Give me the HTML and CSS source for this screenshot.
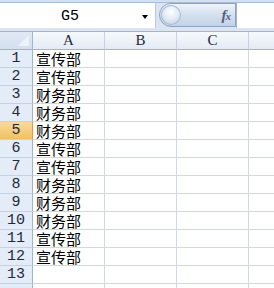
FILE: index.html
```html
<!DOCTYPE html>
<html>
<head>
<meta charset="utf-8">
<link rel="stylesheet" href="styles.css">
</head>
<body>
<div class="app">
  <div class="ribbon"></div>
  <div class="fbar">
    <div class="namebox"><span class="ref">G5</span><span class="caret"></span></div>
    <div class="pill"><span class="knob"></span><span class="fx">f<i>x</i></span></div>
    <div class="finput"></div>
  </div>
  <div class="sheet">
    <div class="corner"></div><div class="ch">A</div><div class="ch">B</div><div class="ch">C</div><div class="ch last"></div>
    <div class="rh">1</div><div class="c">宣传部</div><div class="c"></div><div class="c"></div><div class="c last"></div>
    <div class="rh">2</div><div class="c">宣传部</div><div class="c"></div><div class="c"></div><div class="c last"></div>
    <div class="rh">3</div><div class="c">财务部</div><div class="c"></div><div class="c"></div><div class="c last"></div>
    <div class="rh">4</div><div class="c">财务部</div><div class="c"></div><div class="c"></div><div class="c last"></div>
    <div class="rh sel">5</div><div class="c">财务部</div><div class="c"></div><div class="c"></div><div class="c last"></div>
    <div class="rh">6</div><div class="c">宣传部</div><div class="c"></div><div class="c"></div><div class="c last"></div>
    <div class="rh">7</div><div class="c">宣传部</div><div class="c"></div><div class="c"></div><div class="c last"></div>
    <div class="rh">8</div><div class="c">财务部</div><div class="c"></div><div class="c"></div><div class="c last"></div>
    <div class="rh">9</div><div class="c">财务部</div><div class="c"></div><div class="c"></div><div class="c last"></div>
    <div class="rh">10</div><div class="c">财务部</div><div class="c"></div><div class="c"></div><div class="c last"></div>
    <div class="rh">11</div><div class="c">宣传部</div><div class="c"></div><div class="c"></div><div class="c last"></div>
    <div class="rh">12</div><div class="c">宣传部</div><div class="c"></div><div class="c"></div><div class="c last"></div>
    <div class="rh">13</div><div class="c"></div><div class="c"></div><div class="c"></div><div class="c last"></div>
    <div class="rh"></div><div class="c"></div><div class="c"></div><div class="c"></div><div class="c last"></div>
  </div>
</div>
</body>
</html>
```

FILE: styles.css
```css
html, body {
  margin: 0;
  padding: 0;
  background: #ffffff;
}
.app {
  width: 274px;
  height: 288px;
  overflow: hidden;
  background: #dce6f2;
}
.ribbon {
  height: 2px;
  background: #d3e0f0;
  border-bottom: 1px solid #a7bcd6;
}
.fbar {
  display: flex;
  height: 25px;
  padding-bottom: 3px;
  background: #dbe5f1;
}
.namebox {
  width: 155px;
  background: #fff;
  border-right: 1px solid #b8c9de;
  display: flex;
  align-items: center;
}
.ref {
  font-family: "Liberation Mono", monospace;
  font-size: 15px;
  color: #000;
  margin-left: 61px;
  margin-top: 1px;
}
.caret {
  width: 0;
  height: 0;
  border-left: 3px solid transparent;
  border-right: 3px solid transparent;
  border-top: 4px solid #000;
  margin-left: 63px;
  margin-top: 2px;
}
.pill {
  margin-left: 3px;
  width: 77px;
  height: 24px;
  box-sizing: border-box;
  border: 1px solid #8aa3c2;
  border-radius: 12px 0 0 12px;
  background: linear-gradient(#eef3fa, #d4e0ef 50%, #c3d3e8);
  display: flex;
  align-items: center;
  justify-content: space-between;
}
.knob {
  width: 20px;
  height: 20px;
  margin-left: 1px;
  border-radius: 50%;
  background: radial-gradient(circle at 50% 35%, #ffffff 0, #e6edf6 40%, #c9d6e7 80%, #b4c4da 100%);
  box-shadow: inset 0 0 0 1px #a9bbd3;
}
.fx {
  font-family: "Liberation Serif", serif;
  font-style: italic;
  font-size: 15px;
  font-weight: bold;
  color: #56607a;
  margin-right: 5px;
  letter-spacing: -1px;
}
.fx i {
  font-size: 11px;
}
.finput {
  flex: 1;
  background: #fff;
  border-left: 1px solid #9fb3cd;
}
.sheet {
  display: grid;
  grid-template-columns: 33px 72px 72px 72px 1fr;
  grid-auto-rows: 18px;
  background: #fff;
  border-top: 1px solid #9eb6ce;
}
.sheet > div {
  box-sizing: border-box;
  border-right: 1px solid #d0d7e5;
  border-bottom: 1px solid #d0d7e5;
}
.corner {
  background: linear-gradient(#e0e9f4, #d4dfee);
  border-right: 1px solid #9eb6ce !important;
  border-bottom: 1px solid #9eb6ce !important;
  position: relative;
}
.corner::after {
  content: "";
  position: absolute;
  right: 3px;
  bottom: 3px;
  width: 0;
  height: 0;
  border-left: 11px solid transparent;
  border-bottom: 11px solid #eef3f9;
}
.ch {
  background: linear-gradient(#f6f9fc, #e4ebf5);
  border-right: 1px solid #c5d2e3 !important;
  border-bottom: 1px solid #9eb6ce !important;
  font-family: "Liberation Serif", serif;
  font-size: 15px;
  color: #1f2a3a;
  text-align: center;
  line-height: 17px;
}
.ch.last {
  border-right: none !important;
}
.rh {
  background: #e4ecf7;
  border-right: 1px solid #9eb6ce !important;
  border-bottom: 1px solid #c5d2e3 !important;
  font-family: "Liberation Mono", monospace;
  font-size: 15px;
  color: #1f2a3a;
  text-align: center;
  line-height: 18px;
}
.rh.sel {
  background: linear-gradient(#f9d99f, #f1c15f);
  border-right: 1px solid #f29436 !important;
}
.c {
  font-family: "Noto Sans CJK SC", sans-serif;
  font-size: 15px;
  color: #000;
  line-height: 17px;
  padding-left: 3px;
  white-space: nowrap;
}
.c.last {
  border-right: none;
}
```
